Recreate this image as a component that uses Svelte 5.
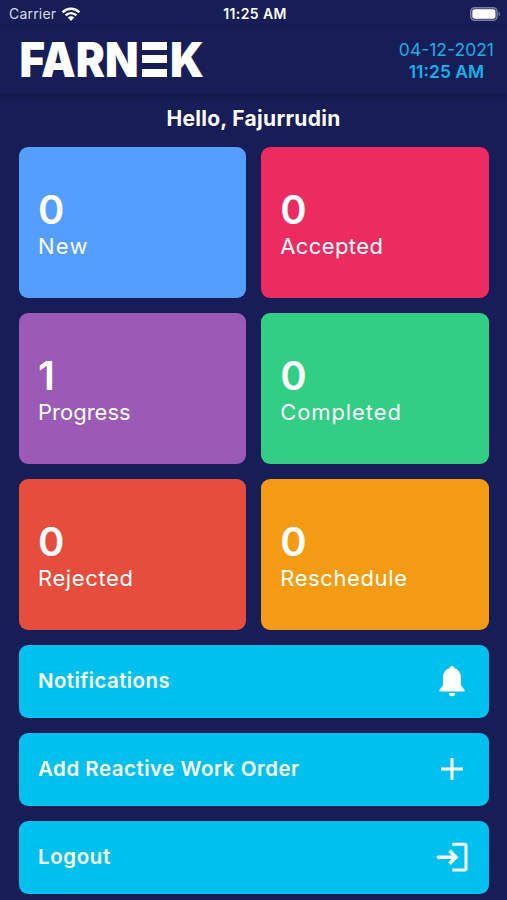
<script>
  const userName = 'Fajurrudin';
  const date = '04-12-2021';
  const time = '11:25 AM';

  // spacing is the tracking of the label, in px
  const cards = [
    { label: 'New', count: 0, color: '#549eff', spacing: 1.2 },
    { label: 'Accepted', count: 0, color: '#ec2b60', spacing: 0.4 },
    { label: 'Progress', count: 1, color: '#9b5ab5', spacing: 0 },
    { label: 'Completed', count: 0, color: '#31ce84', spacing: 0.9 },
    { label: 'Rejected', count: 0, color: '#e64d3c', spacing: 0.6 },
    { label: 'Reschedule', count: 0, color: '#f39c13', spacing: 0.6 },
  ];

  const actions = [
    { label: 'Notifications', icon: 'bell', spacing: 0.4 },
    { label: 'Add Reactive Work Order', icon: 'plus', spacing: 0.5 },
    { label: 'Logout', icon: 'exit', spacing: 0.6 },
  ];
</script>

<div class="screen">
  <div class="status-bar">
    <div class="carrier">
      <span>Carrier</span>
      <svg width="20" height="14" viewBox="0 0 20 14">
        <path d="M1.6 5.3a12 12 0 0 1 16.8 0" fill="none" stroke="#fff" stroke-width="2.5" />
        <path d="M4.6 8.3a7.7 7.7 0 0 1 10.8 0" fill="none" stroke="#fff" stroke-width="2.4" />
        <path d="M10 14l-3.3-3.4a4.7 4.7 0 0 1 6.6 0z" fill="#fff" />
      </svg>
    </div>
    <div class="clock">{time}</div>
    <svg class="battery" width="31" height="14" viewBox="0 0 31 14">
      <rect x="0.6" y="0.6" width="26.6" height="12.8" rx="4" fill="#4a4d7d" stroke="#7a7ca3" stroke-width="1.2" />
      <rect x="2.4" y="2.3" width="23" height="9.4" rx="2.4" fill="#fff" />
      <path d="M28.6 4.8c2 .8 2 3.6 0 4.4z" fill="#7a7ca3" />
    </svg>
  </div>

  <header>
    <svg class="logo" width="200" height="64" viewBox="0 0 200 64" aria-label="Farnek">
      <text x="0.5" y="49" textLength="119" lengthAdjust="spacingAndGlyphs">FARN</text>
      <rect x="123" y="14" width="25" height="8" />
      <rect x="123" y="27" width="25" height="8" />
      <rect x="123" y="41" width="25" height="8" />
      <text x="151" y="49" textLength="34" lengthAdjust="spacingAndGlyphs">K</text>
    </svg>
    <div class="datetime">
      <div class="date">{date}</div>
      <div class="time">{time}</div>
    </div>
  </header>

  <h1>Hello, {userName}</h1>

  <div class="cards">
    {#each cards as card}
      <div class="card" style="background: {card.color}">
        <div class="count">{card.count}</div>
        <div class="label" style="letter-spacing: {card.spacing}px">{card.label}</div>
      </div>
    {/each}
  </div>

  <div class="actions">
    {#each actions as action}
      <button>
        <span style="letter-spacing: {action.spacing}px">{action.label}</span>
        <svg width="36" height="36" viewBox="0 0 36 36">
          {#if action.icon === 'bell'}
            <path fill="#fff" d="M18 3c1.4 0 2.3 1 2.4 2.3 4.3 1.2 6.6 4.8 6.6 9.3v7.6l3.6 5v1.3H5.4v-1.3l3.6-5v-7.6c0-4.5 2.3-8.1 6.6-9.3C15.7 4 16.6 3 18 3z" />
            <path fill="#fff" d="M14.8 30h6.4a3.2 3.2 0 0 1-6.4 0z" />
          {:else if action.icon === 'plus'}
            <path fill="none" stroke="#fff" stroke-width="3" d="M18 7v22M7 18h22" />
          {:else}
            <path fill="none" stroke="#fff" stroke-width="3" stroke-linejoin="round" d="M18.3 5.3h12.2a1.5 1.5 0 0 1 1.5 1.5v22.8a1.5 1.5 0 0 1-1.5 1.5H18.3" />
            <path fill="none" stroke="#fff" stroke-width="3.4" stroke-linecap="round" d="M4.3 18.2h17" />
            <path fill="none" stroke="#fff" stroke-width="3.4" d="M15.5 11.7l6.5 6.5-6.5 6.5" />
          {/if}
        </svg>
      </button>
    {/each}
  </div>
</div>

<style>
  :global(body) {
    margin: 0;
    background: #171d56;
  }

  .screen {
    box-sizing: border-box;
    height: 900px;
    overflow: hidden;
    background: #171d56;
    color: #fff;
    font-family: Inter, "Open Sans", sans-serif;
  }

  .status-bar {
    display: grid;
    grid-template-columns: 1fr auto 1fr;
    align-items: center;
    height: 27px;
    padding: 0 6px 0 9px;
    font-size: 14px;
  }

  .carrier {
    display: flex;
    align-items: center;
    gap: 5px;
    color: #d9dbea;
    letter-spacing: 0.2px;
  }

  .clock {
    font-weight: 600;
    letter-spacing: 0.4px;
  }

  .battery {
    justify-self: end;
  }

  header {
    display: flex;
    justify-content: space-between;
    align-items: flex-start;
    height: 67px;
    box-sizing: border-box;
    padding: 1px 13px 0 19px;
    box-shadow: 0 1px 4px rgba(0, 0, 0, 0.3);
  }

  .logo {
    fill: #fff;
  }

  .logo text {
    font-family: Inter, sans-serif;
    font-size: 48px;
    font-weight: 900;
  }

  .datetime {
    color: #13b0e8;
    text-align: center;
    font-size: 17.5px;
    line-height: 22px;
    margin-top: 11px;
  }

  .time {
    font-weight: 600;
  }

  h1 {
    margin: 0;
    box-sizing: border-box;
    padding-top: 11px;
    height: 52.6px;
    font-size: 21px;
    line-height: 28px;
    font-weight: 700;
    letter-spacing: 0.3px;
    text-align: center;
  }

  .cards {
    display: grid;
    grid-template-columns: 1fr 1fr;
    gap: 15px;
    padding: 0 18.5px 0 19px;
  }

  .card {
    display: flex;
    flex-direction: column;
    justify-content: center;
    height: 151px;
    box-sizing: border-box;
    padding: 6px 19px 0;
    border-radius: 9px;
  }

  .count {
    font-size: 40px;
    line-height: 42px;
    font-weight: 600;
  }

  .label {
    font-size: 22px;
    line-height: 31px;
  }

  .actions {
    display: flex;
    flex-direction: column;
    gap: 15px;
    padding: 15px 18.5px 0 19px;
  }

  button {
    display: flex;
    align-items: center;
    justify-content: space-between;
    height: 73px;
    padding: 0 18.5px 1px 19px;
    border: none;
    border-radius: 9px;
    background: #00c1ee;
    color: #fff;
    font-family: inherit;
    font-size: 20.5px;
    font-weight: 600;
  }
</style>
